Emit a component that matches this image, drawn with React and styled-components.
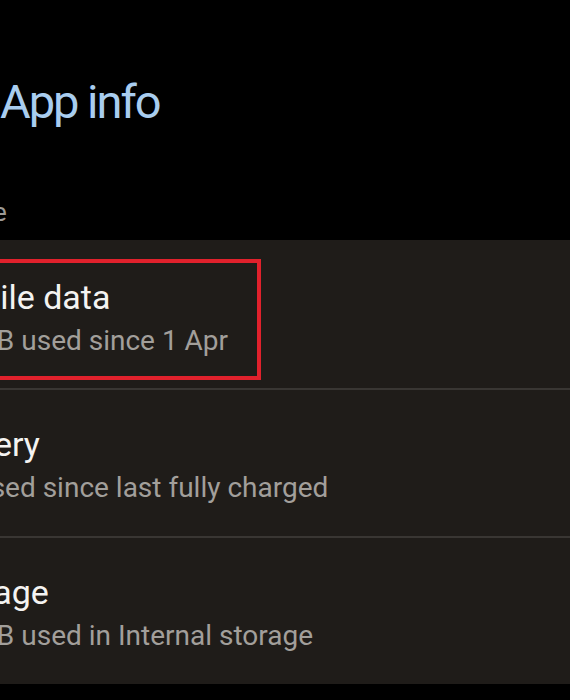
import React from "react";
import styled, { createGlobalStyle } from "styled-components";

const GlobalStyle = createGlobalStyle`
  html, body {
    margin: 0;
    padding: 0;
    background: #000;
    overflow: hidden;
  }
  body {
    font-family: Roboto, "Noto Sans", "Liberation Sans", sans-serif;
    -webkit-font-smoothing: antialiased;
  }
`;

const Page = styled.div`
  margin-left: -92px;
  width: calc(100% + 92px);
  min-height: 700px;
  background: #000;
`;

const Header = styled.h1`
  margin: 0;
  padding: 74px 0 0 92px;
  font-size: 47px;
  line-height: 56px;
  font-weight: 400;
  letter-spacing: -2px;
  color: #a9cdef;
`;

const SectionLabel = styled.div`
  margin-top: 66px;
  padding-left: 26px;
  font-size: 26px;
  line-height: 32px;
  color: #9c9a97;
`;

const Card = styled.div`
  margin-top: 12px;
  background: #1f1c19;
  display: flex;
  flex-direction: column;
`;

const Row = styled.div`
  position: relative;
  height: 148px;
  box-sizing: border-box;
  padding: ${(p) => (p.$first ? "37px" : "34px")} 0 0 24px;
  display: flex;
  flex-direction: column;
  gap: 6px;
  border-top: ${(p) => (p.$first ? "none" : "2px solid #393633")};
  white-space: nowrap;
`;

const Title = styled.div`
  font-size: 34px;
  line-height: 40px;
  color: #f4f3f1;
`;

const Subtitle = styled.div`
  font-size: 28px;
  line-height: 36px;
  color: #a29f9b;
`;

const Highlight = styled.div`
  position: absolute;
  top: 19px;
  left: 8px;
  width: 345px;
  height: 121px;
  box-sizing: border-box;
  border: 4px solid #e0212c;
  pointer-events: none;
`;

const items = [
  { title: "Mobile data", sub: "1.4 GB used since 1 Apr", marked: true },
  { title: "Battery", sub: "0% used since last fully charged" },
  { title: "Storage", sub: "1.2 GB used in Internal storage" },
];

export default function App() {
  return (
    <>
      <GlobalStyle />
      <Page>
        <Header>App info</Header>
        <SectionLabel>Usage</SectionLabel>
        <Card>
          {items.map((it, i) => (
            <Row key={it.title} $first={i === 0}>
              <Title>{it.title}</Title>
              <Subtitle>{it.sub}</Subtitle>
              {it.marked && <Highlight />}
            </Row>
          ))}
        </Card>
      </Page>
    </>
  );
}
